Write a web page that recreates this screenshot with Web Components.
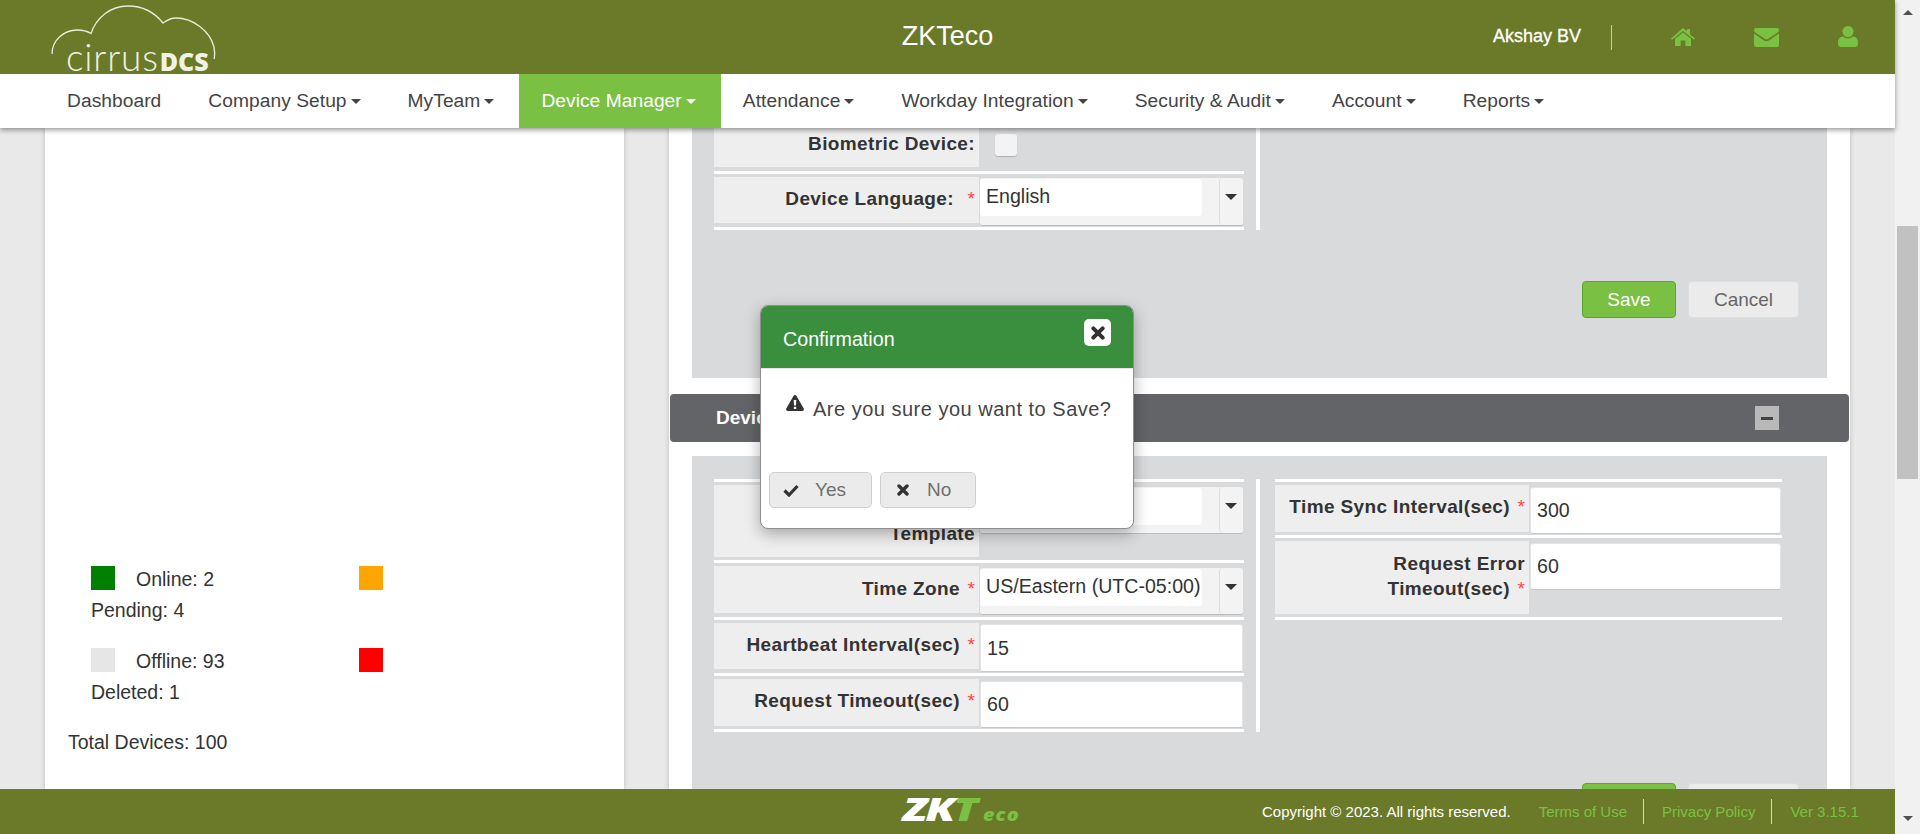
<!DOCTYPE html>
<html>
<head>
<meta charset="utf-8">
<title>ZKTeco</title>
<style>
  html, body { margin: 0; height: 100%; overflow: hidden; }
  body {
    display: flex;
    font-family: "Liberation Sans", Arial, sans-serif;
    color: #333;
  }
</style>
</head>
<body>
<app-shell>
  <app-header slot="header" title="ZKTeco" user="Akshay BV"></app-header>
  <app-nav slot="nav">
    <nav-item>Dashboard</nav-item>
    <nav-item menu>Company Setup</nav-item>
    <nav-item menu>MyTeam</nav-item>
    <nav-item menu active>Device Manager</nav-item>
    <nav-item menu>Attendance</nav-item>
    <nav-item menu>Workday Integration</nav-item>
    <nav-item menu>Security &amp; Audit</nav-item>
    <nav-item menu>Account</nav-item>
    <nav-item menu>Reports</nav-item>
  </app-nav>

  <device-summary slot="left"></device-summary>

  <form-panel slot="right" labels>
    <form-col>
      <form-row style="--h:39px;--pad:3px;--top:0px;--after:4px">
        <span slot="label">Biometric Device:</span>
        <check-box></check-box>
      </form-row>
      <form-row style="--h:46px;--after:4px;--field-top:1px">
        <span slot="label">Device Language:<req-star wide></req-star></span>
        <select-box value="English" style="height:48px"></select-box>
      </form-row>
    </form-col>
  </form-panel>

  <section-bar slot="right" label="Device"></section-bar>

  <form-panel slot="right" two>
    <form-col top>
      <form-row style="--h:72px;--pad:11px">
        <span slot="label">&nbsp;<br>Template</span>
        <select-box></select-box>
      </form-row>
      <form-row style="--h:47px;--after:4px;--pad:10px">
        <span slot="label">Time Zone<req-star></req-star></span>
        <select-box value="US/Eastern (UTC-05:00)"></select-box>
      </form-row>
      <form-row style="--h:46px;--after:4px;--field-top:1px">
        <span slot="label">Heartbeat Interval(sec)<req-star></req-star></span>
        <text-box value="15" style="height:48px;line-height:46px"></text-box>
      </form-row>
      <form-row style="--h:47px">
        <span slot="label">Request Timeout(sec)<req-star></req-star></span>
        <text-box value="60"></text-box>
      </form-row>
    </form-col>
    <form-col top narrow>
      <form-row style="--h:47px">
        <span slot="label">Time Sync Interval(sec)<req-star></req-star></span>
        <text-box value="300"></text-box>
      </form-row>
      <form-row style="--h:73px;--pad:10px">
        <span slot="label">Request Error<br>Timeout(sec)<req-star></req-star></span>
        <text-box value="60"></text-box>
      </form-row>
    </form-col>
  </form-panel>

  <app-footer slot="footer"></app-footer>
  <confirm-dialog slot="overlay" title="Confirmation" message="Are you sure you want to Save?"></confirm-dialog>
  <fake-scrollbar slot="scrollbar"></fake-scrollbar>
</app-shell>

<script>
const ICONS = {
  home: '<svg width="24" height="18" viewBox="0 0 24 18"><path d="M12 0l4 3.2V1h3v5.6l5 3.9-1 1.2L12 3 1 11.7 0 10.5z"/><path d="M12 4.400l8 6.300v7.300h-5.600v-5.400H9.600V18H4v-7.300z"/></svg>',
  envelope: '<svg width="25" height="19" viewBox="0 0 25 19"><path d="M2 0h21a2 2 0 0 1 2 2c0 1-.6 2-1.600 2.700L13.800 11a2.200 2.200 0 0 1-2.600 0L1.600 4.700C.6 4 0 3 0 2a2 2 0 0 1 2-2z"/><path d="M25 5.600V17a2 2 0 0 1-2 2H2a2 2 0 0 1-2-2V5.600l10 7c1.500 1 3.500 1 5 0z"/></svg>',
  user: '<svg width="20" height="21" viewBox="0 0 20 21"><circle cx="10" cy="5.500" r="5.500"/><path d="M5 10.500c1.300 1.200 3 1.800 5 1.800s3.700-.6 5-1.800c3 0 5 2.600 5 6.200v1c0 2-1.400 3.300-3.200 3.300H3.200C1.400 21 0 19.700 0 17.700v-1c0-3.600 2-6.200 5-6.200z"/></svg>',
  warning: '<svg width="18" height="16" viewBox="0 0 18 16"><path fill-rule="evenodd" d="M9 0c.6 0 1.100.3 1.400.8l7.300 12.700c.6 1.100-.1 2.500-1.400 2.500H1.700C.4 16-.3 14.600.3 13.500L7.600.8C7.900.3 8.400 0 9 0zM7.700 5l.3 5.500h2L10.300 5zM7.800 11.800v2.200h2.400v-2.200z"/></svg>',
  check: '<svg width="16" height="13" viewBox="0 0 16 13"><path d="M1.500 6.500l4.500 4.500 8.500-9" fill="none" stroke="currentColor" stroke-width="3.200"/></svg>',
  times: '<svg width="12" height="12" viewBox="0 0 12 12"><path d="M2 2l8 8M10 2l-8 8" fill="none" stroke="currentColor" stroke-width="3.400" stroke-linecap="round"/></svg>'
};

class AppShell extends HTMLElement {
  constructor() {
    super();
    this.attachShadow({ mode: 'open' });
    this.shadowRoot.innerHTML = `
      <style>
        :host { display: flex; width: 1920px; height: 834px; position: relative; }
        .page { width: 1895px; height: 834px; display: flex; flex-direction: column; background: #e9e9e9; position: relative; }
        .bars { position: relative; z-index: 5; box-shadow: 0 2px 5px rgba(0,0,0,.4); }
        main { flex: 1; min-height: 0; overflow: hidden; display: flex; padding-left: 45px; gap: 45px; }
        .left { width: 579px; flex: none; background: #fff; box-shadow: 0 0 5px rgba(0,0,0,.2); }
        .right { width: 1181px; flex: none; background: #fff; box-shadow: 0 0 5px rgba(0,0,0,.2); padding: 0 23px; box-sizing: border-box; }
        .foot { position: relative; z-index: 5; }
      </style>
      <div class="page">
        <div class="bars">
          <slot name="header"></slot>
          <slot name="nav"></slot>
        </div>
        <main>
          <div class="left"><slot name="left"></slot></div>
          <div class="right"><slot name="right"></slot></div>
        </main>
        <div class="foot"><slot name="footer"></slot></div>
        <slot name="overlay"></slot>
      </div>
      <slot name="scrollbar"></slot>
    `;
  }
}

class AppHeader extends HTMLElement {
  constructor() {
    super();
    this.attachShadow({ mode: 'open' });
  }
  connectedCallback() {
    this.shadowRoot.innerHTML = `
      <style>
        :host { display: grid; grid-template-columns: 1fr auto 1fr; align-items: center; height: 74px; background: #6b7a28; color: #fff; }
        .logo { position: relative; height: 74px; }
        .logo svg { position: absolute; left: 50px; top: 4px; }
        .word { position: absolute; left: 66px; top: 34px; line-height: 36px; white-space: nowrap; color: #f0f2e4; }
        .word .c { font: 300 37px Lato, "Open Sans", sans-serif; letter-spacing: .8px; }
        .word .d { font: 800 25px "Open Sans", sans-serif; letter-spacing: 0; margin-left: 1px; }
        h1 { margin: 0; font-size: 27px; font-weight: 400; position: relative; top: -1px; }
        .right { display: flex; align-items: center; justify-content: flex-end; color: #7ac143; fill: #7ac143; }
        .user { color: #fff; font-size: 18px; font-weight: 400; -webkit-text-stroke: .3px #fff; width: 118px; height: 25px; line-height: 22px; border-right: 1px solid #c9cfae; margin-right: 59px; }
        .ic { display: flex; }
        .ic.home { margin-right: 59px; }
        .ic.env { margin-right: 59px; }
        .ic.usr { margin-right: 37px; margin-top: -1px; }
      </style>
      <div class="logo">
        <svg width="170" height="60" viewBox="0 0 170 60" fill="none" stroke="#e9ecd6" stroke-width="1.300">
          <path d="M2 50C2 36 14 26 27 26c6 0 11 1.500 14 3.500 C46 14 60 2 78 2c15 0 27 7 35 17 4-3 8-5 13-5 17 0 34 13 38 29 .8 4 .8 8 .3 12"/>
        </svg>
        <div class="word"><span class="c">cirrus</span><span class="d">DCS</span></div>
      </div>
      <h1>${this.getAttribute('title')}</h1>
      <div class="right">
        <span class="user">${this.getAttribute('user')}</span>
        <span class="ic home">${ICONS.home}</span>
        <span class="ic env">${ICONS.envelope}</span>
        <span class="ic usr">${ICONS.user}</span>
      </div>
    `;
  }
}

class AppNav extends HTMLElement {
  constructor() {
    super();
    this.attachShadow({ mode: 'open' });
    this.shadowRoot.innerHTML = `
      <style>
        :host { display: flex; height: 54px; padding-left: 45px; background: #fff; }
      </style>
      <slot></slot>
    `;
  }
}

class NavItem extends HTMLElement {
  constructor() {
    super();
    this.attachShadow({ mode: 'open' });
    this.shadowRoot.innerHTML = `
      <style>
        :host { display: flex; align-items: center; padding: 0 25px 0 22px; font-size: 19.200px; letter-spacing: .05px; color: #444; white-space: nowrap; }
        :host([active]) { background: #7ac143; color: #fff; }
        .caret { display: none; width: 0; height: 0; margin: 1px 0 0 4px; border: 5.500px solid transparent; border-top-color: currentColor; border-bottom: 0; }
        :host([menu]) .caret { display: block; }
      </style>
      <slot></slot><span class="caret"></span>
    `;
  }
}

class DeviceSummary extends HTMLElement {
  constructor() {
    super();
    this.attachShadow({ mode: 'open' });
    this.shadowRoot.innerHTML = `
      <style>
        :host { display: block; padding: 438px 0 0 23px; font-size: 19.500px; color: #333; }
        .legend { display: grid; grid-template-columns: 268px 24px; padding-left: 23px; row-gap: 7px; line-height: 25px; }
        .item { display: flex; align-items: center; gap: 21px; height: 24px; }
        .item b { font-weight: 400; padding-top: 2px; }
        .sw { width: 24px; height: 24px; }
        .span { grid-column: 1 / 3; padding-top: 1px; margin-bottom: 18px; }
        .total { margin-top: 6px; padding-top: 1px; line-height: 25px; }
      </style>
      <div class="legend">
        <div class="item"><span class="sw" style="background:#008000"></span><b>Online: 2</b></div>
        <span class="sw" style="background:#ffa500"></span>
        <div class="span">Pending: 4</div>
        <div class="item"><span class="sw" style="background:#e6e6e6"></span><b>Offline: 93</b></div>
        <span class="sw" style="background:#ff0000"></span>
        <div class="span">Deleted: 1</div>
      </div>
      <div class="total">Total Devices: 100</div>
    `;
  }
}

class FormPanel extends HTMLElement {
  constructor() {
    super();
    this.attachShadow({ mode: 'open' });
  }
  connectedCallback() {
    // the second panel's buttons sit under the footer, only their top edge shows
    const labels = this.hasAttribute('labels');
    this.shadowRoot.innerHTML = `
      <style>
        :host { display: block; background: #d9dadc; padding: 0 28px 60px 22px; }
        :host([two]) { padding-top: 23px; }
        .cols { display: flex; }
        .btns { display: flex; justify-content: flex-end; gap: 12px; margin-top: 51px; }
        button { font: 19px "Liberation Sans", Arial, sans-serif; height: 37px; border-radius: 4px; padding: 0; box-sizing: border-box; }
        .save { width: 94px; background: #7ac143; border: 1px solid #5fa32f; color: #fff; }
        .cancel { width: 111px; background: #ebebeb; border: 1px solid #dedede; color: #666; }
      </style>
      <div class="cols"><slot></slot></div>
      <div class="btns"><button class="save">${labels ? 'Save' : ''}</button><button class="cancel">${labels ? 'Cancel' : ''}</button></div>
    `;
  }
}

class FormCol extends HTMLElement {
  constructor() {
    super();
    this.attachShadow({ mode: 'open' });
    this.shadowRoot.innerHTML = `
      <style>
        :host { display: block; width: 530px; --label-w: 265px; padding-right: 12px; border-right: 4px solid #fff; }
        :host([narrow]) { width: 507px; --label-w: 254px; border-right: 0; padding-right: 0; margin-left: 15px; }
        .line { height: 3px; background: #fff; display: none; }
        :host([top]) .line { display: block; }
      </style>
      <div class="line"></div>
      <slot></slot>
    `;
  }
}

class FormRow extends HTMLElement {
  constructor() {
    super();
    this.attachShadow({ mode: 'open' });
    this.shadowRoot.innerHTML = `
      <style>
        :host { display: flex; align-items: flex-start; gap: 1px; padding-top: var(--top, 3px); padding-bottom: var(--after, 3px); border-bottom: 3px solid #fff; font-size: 19.600px; }
        .label { width: var(--label-w); height: var(--h); flex: none; background: #eeeeee; box-sizing: border-box; padding: var(--pad, 9px) 4px 0 0; text-align: right; font-size: 19px; font-weight: 700; line-height: 25px; letter-spacing: .38px; color: #333; }
        .field { flex: 1; height: var(--h); padding-top: var(--field-top, 2px); box-sizing: border-box; }
      </style>
      <div class="label"><slot name="label"></slot></div>
      <div class="field"><slot></slot></div>
    `;
  }
}

class ReqStar extends HTMLElement {
  constructor() {
    super();
    this.attachShadow({ mode: 'open' });
    this.shadowRoot.innerHTML = `
      <style>
        :host { display: inline-block; width: 15px; text-align: right; color: #f44; font-weight: 400; letter-spacing: 0; }
        :host([wide]) { width: 21px; }
      </style>
      *
    `;
  }
}

class TextBox extends HTMLElement {
  constructor() {
    super();
    this.attachShadow({ mode: 'open' });
  }
  connectedCallback() {
    this.shadowRoot.innerHTML = `
      <style>
        :host { display: block; height: 47px; box-sizing: border-box; margin-right: 1px; background: #fff; border-radius: 3px; border: 1px solid #e4e4e4; border-bottom-color: #c8c8c8; padding: 0 6px; color: #333; line-height: 44px; }
      </style>
      ${this.getAttribute('value') || ''}
    `;
  }
}

class SelectBox extends HTMLElement {
  constructor() {
    super();
    this.attachShadow({ mode: 'open' });
  }
  connectedCallback() {
    this.shadowRoot.innerHTML = `
      <style>
        :host { display: flex; height: 47px; box-sizing: border-box; margin-right: 1px; background: #f3f3f3; border-radius: 3px; border-bottom: 1px solid #bbb; color: #333; }
        .val { width: 222px; height: 37px; margin-top: 1px; box-sizing: border-box; background: #fff; border-radius: 3px; padding-left: 6px; line-height: 35px; white-space: nowrap; overflow: hidden; }
        .btn { width: 23px; margin-left: 17px; border-left: 1px solid #ddd; border-radius: 4px; display: flex; justify-content: center; padding-top: 16px; box-sizing: border-box; }
        .btn i { width: 0; height: 0; border: 6.500px solid transparent; border-top-color: #333; border-bottom: 0; }
      </style>
      <div class="val">${this.getAttribute('value') || ''}</div>
      <div class="btn"><i></i></div>
    `;
  }
}

class CheckBox extends HTMLElement {
  constructor() {
    super();
    this.attachShadow({ mode: 'open' });
    this.shadowRoot.innerHTML = `
      <style>
        :host { display: block; width: 22px; height: 22px; margin: 4px 0 0 15px; background: #f3f3f3; border-radius: 3px; box-shadow: 0 1px 1px rgba(0,0,0,.2); }
      </style>
    `;
  }
}

class SectionBar extends HTMLElement {
  constructor() {
    super();
    this.attachShadow({ mode: 'open' });
  }
  connectedCallback() {
    this.shadowRoot.innerHTML = `
      <style>
        :host { display: flex; align-items: center; justify-content: space-between; height: 48px; margin: 16px -22px 14px; padding: 0 70px 0 46px; background: #636467; border-radius: 4px; color: #fff; font-size: 19px; font-weight: 700; }
        .min { width: 24px; height: 24px; background: #b9b9b9; display: flex; align-items: center; justify-content: center; }
        .min i { width: 12px; height: 3px; background: #444; }
      </style>
      <span>${this.getAttribute('label')}</span>
      <span class="min"><i></i></span>
    `;
  }
}

class AppFooter extends HTMLElement {
  constructor() {
    super();
    this.attachShadow({ mode: 'open' });
    this.shadowRoot.innerHTML = `
      <style>
        :host { display: flex; align-items: center; height: 45px; background: #6b7a28; font-size: 15px; color: #7ac143; position: relative; }
        .brand { margin-left: 903px; width: 359px; display: flex; align-items: baseline; white-space: nowrap; line-height: 45px; }
        .mark { display: inline-block; width: 80px; transform: scaleX(1.41); transform-origin: left; font: italic 800 32px/45px "Open Sans", sans-serif; letter-spacing: -1.500px; color: #fff; }
        .mark b { color: #7ac143; font-weight: 800; }
        .e { display: inline-block; transform: scaleX(1.1); transform-origin: left; font: italic 800 18px/45px "Open Sans", sans-serif; color: #7ac143; letter-spacing: 1px; }
        .copy { color: #fff; margin-right: 28px; }
        .sep { border-right: 1px solid #d8dcc0; height: 25px; line-height: 25px; padding-right: 16px; margin-right: 18px; }
      </style>
      <div class="brand"><span class="mark">ZK<b>T</b></span><span class="e">eco</span></div>
      <span class="copy">Copyright © 2023. All rights reserved.</span>
      <span class="sep">Terms of Use</span>
      <span class="sep">Privacy Policy</span>
      <span>Ver 3.15.1</span>
    `;
  }
}

class ConfirmDialog extends HTMLElement {
  constructor() {
    super();
    this.attachShadow({ mode: 'open' });
  }
  connectedCallback() {
    this.shadowRoot.innerHTML = `
      <style>
        :host { position: absolute; left: 760px; top: 305px; width: 374px; height: 224px; box-sizing: border-box; background: #fff; border: 1px solid #8f8f8f; border-radius: 8px; box-shadow: 0 5px 15px rgba(0,0,0,.3); z-index: 10; overflow: hidden; }
        header { display: flex; justify-content: space-between; height: 63px; background: #3a8f3e; color: #fff; padding: 13px 22px 0 22px; box-sizing: border-box; border-bottom: 1px solid #e8e8e8; font-size: 19.700px; line-height: 40px; }
        .close { width: 27px; height: 27px; background: #fff; border-radius: 5px; color: #333; display: flex; align-items: center; justify-content: center; }
        .close svg { width: 14px; height: 14px; }
        .msg { display: flex; align-items: flex-start; height: 103px; padding: 26px 0 0 25px; box-sizing: border-box; font-size: 20px; letter-spacing: .5px; color: #444; line-height: 28px; }
        .msg svg { margin-right: 9px; fill: #333; }
        .acts { display: flex; gap: 8px; padding-left: 8px; }
        button { display: flex; align-items: center; height: 36px; box-sizing: border-box; padding: 0; background: #ebebeb; border: 1px solid #cfcfcf; border-radius: 5px; font: 19px "Liberation Sans", Arial, sans-serif; color: #707070; }
        button svg { color: #333; }
        .yes { width: 103px; padding-left: 13px; gap: 16px; }
        .no { width: 96px; padding-left: 16px; gap: 18px; }
      </style>
      <header><span>${this.getAttribute('title')}</span><span class="close">${ICONS.times}</span></header>
      <div class="msg">${ICONS.warning}<span>${this.getAttribute('message')}</span></div>
      <div class="acts">
        <button class="yes">${ICONS.check}Yes</button>
        <button class="no">${ICONS.times}No</button>
      </div>
    `;
  }
}

class FakeScrollbar extends HTMLElement {
  constructor() {
    super();
    this.attachShadow({ mode: 'open' });
    this.shadowRoot.innerHTML = `
      <style>
        :host { display: flex; flex-direction: column; align-items: center; width: 25px; height: 834px; background: #f1f1f1; box-sizing: border-box; padding-top: 10px; }
        i { width: 0; height: 0; border: 5.500px solid transparent; }
        .up { border-bottom-color: #505050; border-top: 0; }
        .down { border-top-color: #505050; border-bottom: 0; margin-top: 337px; }
        .thumb { width: 21px; height: 253px; background: #c1c1c1; margin-top: 211px; }
      </style>
      <i class="up"></i><div class="thumb"></div><i class="down"></i>
    `;
  }
}

customElements.define('app-shell', AppShell);
customElements.define('app-header', AppHeader);
customElements.define('app-nav', AppNav);
customElements.define('nav-item', NavItem);
customElements.define('device-summary', DeviceSummary);
customElements.define('form-panel', FormPanel);
customElements.define('form-col', FormCol);
customElements.define('form-row', FormRow);
customElements.define('req-star', ReqStar);
customElements.define('text-box', TextBox);
customElements.define('select-box', SelectBox);
customElements.define('check-box', CheckBox);
customElements.define('section-bar', SectionBar);
customElements.define('app-footer', AppFooter);
customElements.define('confirm-dialog', ConfirmDialog);
customElements.define('fake-scrollbar', FakeScrollbar);
</script>
</body>
</html>
